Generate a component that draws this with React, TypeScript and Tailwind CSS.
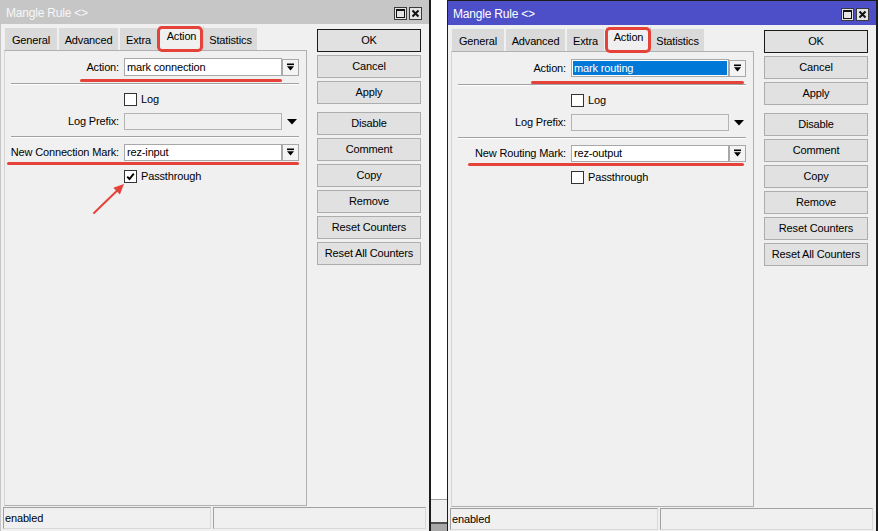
import React from "react";

const RED = "bg-[#e5433a]";

function DropBtn() {
  return (
    <div className="w-[17px] h-[17px] border border-[#a8a8a8] bg-[#f4f4f4] flex items-center justify-center shrink-0">
      <svg width="9" height="9" viewBox="0 0 9 9">
        <rect x="1" y="0.5" width="7" height="1.6" fill="#000" />
        <path d="M1 3.2 H8 L4.5 7.6 Z" fill="#000" />
      </svg>
    </div>
  );
}

function Check({ checked }: { checked?: boolean }) {
  return (
    <div className="w-[13px] h-[13px] border border-[#333] bg-white flex items-center justify-center shrink-0">
      {checked && (
        <svg width="9" height="9" viewBox="0 0 9 9">
          <path d="M1.2 4.6 L3.5 7 L7.8 1.6" stroke="#000" strokeWidth="1.9" fill="none" />
        </svg>
      )}
    </div>
  );
}

function Btn({ children, def, className = "" }: { children: React.ReactNode; def?: boolean; className?: string }) {
  return (
    <div
      className={`h-[23px] w-[104px] flex items-center justify-center bg-[#e1e1e1] border ${
        def ? "border-[#1a1a1a]" : "border-[#adadad]"
      } ${className}`}
    >
      {children}
    </div>
  );
}

function Tab({ label, w, selected }: { label: string; w: string; selected?: boolean }) {
  if (selected) {
    return (
      <div className={`${w} h-[24px] bg-[#f0f0f0] flex items-start justify-center pt-[5px] border-x border-[#d0d0d0]`}>
        {label}
      </div>
    );
  }
  return (
    <div className={`${w} mt-[2px] h-[22px] bg-[#dadada] border-r-2 border-[#f0f0f0] flex items-center justify-center pt-[2px]`}>
      {label}
    </div>
  );
}

function Win({
  active,
  markLabel,
  markValue,
  actionValue,
  passthrough,
  className = "",
  children,
}: {
  active?: boolean;
  markLabel: string;
  markValue: string;
  actionValue: string;
  passthrough?: boolean;
  className?: string;
  children?: React.ReactNode;
}) {
  return (
    <div
      className={`relative w-[431px] shrink-0 flex flex-col bg-[#f0f0f0] border-l border-r-2 ${
        active ? "h-[532px] border-t border-[#1c1c1c]" : "h-[531px] border-l-[#c6c6c6] border-r-[#1c1c1c]"
      } ${className}`}
    >
      {/* title bar */}
      <div
        className={`h-[24px] shrink-0 flex items-center pl-[5px] pr-[7px] ${
          active ? "bg-[#4c4fc7] text-white" : "bg-[#c6c6c6] text-[#f7f7f7]"
        }`}
      >
        <span className="text-[12px] tracking-[-0.2px] mt-[1px]">Mangle Rule &lt;&gt;</span>
        <div className="ml-auto flex gap-[2px] mt-[2px]">
          <div className="w-[13px] h-[13px] border border-[#3a3a3a] bg-[#e4e4e4] flex items-center justify-center">
            <div className="w-[9px] h-[9px] border border-[#111] border-t-2" />
          </div>
          <div className="w-[13px] h-[13px] border border-[#3a3a3a] bg-[#e4e4e4] flex items-center justify-center">
            <svg width="9" height="9" viewBox="0 0 9 9">
              <path d="M1.5 1.5 L7.5 7.5 M7.5 1.5 L1.5 7.5" stroke="#111" strokeWidth="2" />
            </svg>
          </div>
        </div>
      </div>

      {/* body */}
      <div className="flex-1 flex min-h-0">
        <div className="ml-[3px] w-[303px] flex flex-col pt-[2px]">
          <div className="flex h-[24px] shrink-0">
            <div className="w-[1px]" />
            <Tab label="General" w="w-[54px]" />
            <Tab label="Advanced" w="w-[61px]" />
            <Tab label="Extra" w="w-[39px]" />
            <Tab label="Action" w="w-[45px]" selected />
            <Tab label="Statistics" w="w-[55px]" />
          </div>
          <div className="flex-1 border border-[#b0b0b0] border-l-[#d4d4d4] flex flex-col">
            {/* Action row */}
            <div className="flex items-center h-[18px] mt-[7px]">
              <div className="w-[114px] text-right">Action:</div>
              <div className="ml-[5px] w-[158px] h-[18px] border border-[#a8a8a8] bg-white flex items-center">
                {active ? (
                  <div className="m-[1px] h-[14px] flex-1 bg-[#0078d7] text-white flex items-center pl-[1px]">
                    {actionValue}
                  </div>
                ) : (
                  <span className="pl-[2px]">{actionValue}</span>
                )}
              </div>
              <DropBtn />
            </div>
            {/* separator */}
            <div className="ml-[6px] w-[288px] mt-[7px] h-[2px] border-t border-[#a0a0a0] border-b border-b-white" />
            {/* Log */}
            <div className="flex items-center h-[13px] mt-[8px]">
              <div className="w-[119px]" />
              <Check />
              <span className="ml-[4px]">Log</span>
            </div>
            {/* Log prefix */}
            <div className="flex items-center h-[17px] mt-[7px]">
              <div className="w-[114px] text-right">Log Prefix:</div>
              <div className="ml-[5px] w-[158px] h-[17px] border border-[#b4b4b4] bg-[#f0f0f0]" />
              <svg className="ml-[5px]" width="10" height="6" viewBox="0 0 10 6">
                <path d="M0 0 H10 L5 5.5 Z" fill="#000" />
              </svg>
            </div>
            {/* separator */}
            <div className="ml-[6px] w-[288px] mt-[6px] h-[2px] border-t border-[#a0a0a0] border-b border-b-white" />
            {/* mark row */}
            <div className="flex items-center h-[17px] mt-[6px]">
              <div className="w-[114px] text-right whitespace-nowrap">{markLabel}</div>
              <div className="ml-[5px] w-[158px] h-[17px] border border-[#a8a8a8] bg-white flex items-center">
                <span className="pl-[2px]">{markValue}</span>
              </div>
              <DropBtn />
            </div>
            {/* passthrough */}
            <div className="flex items-center h-[13px] mt-[9px]">
              <div className="w-[119px]" />
              <Check checked={passthrough} />
              <span className="ml-[4px]">Passthrough</span>
            </div>
          </div>
        </div>

        {/* buttons */}
        <div className="ml-[10px] w-[104px] pt-[5px] flex flex-col">
          <Btn def>OK</Btn>
          <Btn className="mt-[3px]">Cancel</Btn>
          <Btn className="mt-[3px]">Apply</Btn>
          <Btn className="mt-[8px]">Disable</Btn>
          <Btn className="mt-[3px]">Comment</Btn>
          <Btn className="mt-[3px]">Copy</Btn>
          <Btn className="mt-[3px]">Remove</Btn>
          <Btn className="mt-[3px]">Reset Counters</Btn>
          <Btn className="mt-[3px]">Reset All Counters</Btn>
        </div>
      </div>

      {/* status bar */}
      <div className="h-[22px] mt-[1px] mb-[2px] flex shrink-0 pl-[2px]">
        <div className="w-[208px] h-full border border-[#a0a0a0] border-r-[#d8d8d8] border-b-[#d8d8d8] flex items-center pl-[1px]">
          enabled
        </div>
        <div className="ml-[2px] w-[213px] h-full border border-[#a0a0a0] border-r-[#d8d8d8] border-b-[#d8d8d8]" />
      </div>

      {children}
    </div>
  );
}

export default function App() {
  return (
    <div className="w-[878px] h-[531px] overflow-hidden flex bg-white font-['Liberation_Sans',Arial,sans-serif] text-[11px] tracking-[-0.15px] text-black leading-none">
      <Win markLabel="New Connection Mark:" markValue="rez-input" actionValue="mark connection" passthrough>
        <div className="absolute left-[156px] top-[26px] w-[46px] h-[26px] border-[3px] border-[#e5433a] rounded-[5px]" />
        <div className={`absolute left-[79px] top-[79px] w-[202px] h-[3px] rounded-full ${RED}`} />
        <div className={`absolute left-[6px] top-[162px] w-[292px] h-[3px] rounded-full ${RED}`} />
        <svg className="absolute left-[85px] top-[175px]" width="45" height="45" viewBox="0 0 45 45">
          <line x1="8" y1="38" x2="31.5" y2="15.3" stroke="#e5433a" strokeWidth="2" strokeLinecap="round" />
          <path d="M38 9 L33.9 19.6 L27.3 12.8 Z" fill="#e5433a" />
        </svg>
      </Win>

      {/* background strip between the windows */}
      <div className="w-[16px] h-[531px] shrink-0 flex flex-col">
        <div className="flex-1 bg-white" />
        <div className="h-[1px] bg-[#a0a0a0]" />
        <div className="h-[22px] bg-[#f0f0f0]" />
        <div className="h-[2px] bg-[#505050]" />
        <div className="h-[7px] bg-[#a8a8a8]" />
      </div>

      <Win active markLabel="New Routing Mark:" markValue="rez-output" actionValue="mark routing">
        <div className="absolute left-[157px] top-[26px] w-[46px] h-[26px] border-[3px] border-[#e5433a] rounded-[5px]" />
        <div className={`absolute left-[83px] top-[80px] w-[213px] h-[3px] rounded-full ${RED}`} />
        <div className={`absolute left-[20px] top-[162px] w-[276px] h-[3px] rounded-full ${RED}`} />
      </Win>
    </div>
  );
}
